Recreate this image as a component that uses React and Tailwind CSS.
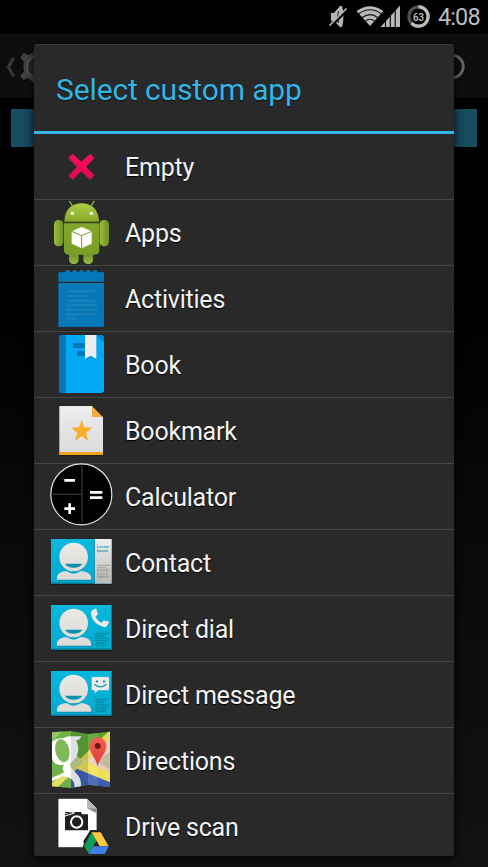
import React from "react";

const EmptyIcon = () => (
  <path
    d="M74 60 L100 84 L126 60 L139 72 L114 98 L139 124 L126 137 L100 112 L74 137 L62 125 L87 98 L61 72 Z"
    fill="url(#cross)"
    stroke="#9b2a4c"
    strokeWidth="1.5"
    strokeLinejoin="round"
  />
);

const AppsIcon = () => (
  <g>
    <path d="M65 4 L73 17 M138 4 L130 17" stroke="#91b32c" strokeWidth="4" strokeLinecap="round" />
    <rect x="63" y="140" width="29" height="52" rx="13" fill="url(#droidDark)" />
    <rect x="106" y="140" width="29" height="52" rx="13" fill="url(#droidDark)" />
    <rect x="18" y="60" width="28" height="79" rx="13" fill="url(#droidSide)" />
    <rect x="155" y="60" width="28" height="79" rx="13" fill="url(#droidSide)" />
    <path d="M49 65 C50 28 72 10 101 10 C130 10 152 28 153 65 Z" fill="url(#droidHead)" />
    <path d="M48 70 H154 V150 Q154 164 140 164 H62 Q48 164 48 150 Z" fill="url(#droidBody)" />
    <path d="M48 67 H154" stroke="#3b4816" strokeWidth="3" />
    <circle cx="73" cy="40" r="5" fill="#fff" />
    <circle cx="130" cy="40" r="5" fill="#fff" />
    <path d="M101 81 L131 94 V131 L101 145 L71 131 V94 Z" fill="#fff" />
    <path d="M71 94 L101 107 L131 94 M101 107 V145" fill="none" stroke="#779c25" strokeWidth="3" />
  </g>
);

const ActivitiesIcon = () => (
  <g>
    <path
      d="M31 19 H51 Q53 12 59 12 Q65 12 67 18 H72 Q74 12 80 12 Q86 12 88 18 H92 Q94 12 100 12 Q106 12 108 18 H113 Q115 12 121 12 Q127 12 129 18 H133 Q135 12 141 12 Q147 12 149 19 H168 V47 H31 Z"
      fill="#0478b8"
    />
    <rect x="31" y="52" width="137" height="131" rx="2" fill="#0478b8" />
    <path d="M31 53 H168" stroke="#1989c5" strokeWidth="2" />
    <path
      d="M60 76 H147 M53 90 H120 M60 104 H147 M53 117 H147 M53 131 H148 M53 145 H147 M53 159 H87"
      stroke="#1d82b7"
      strokeWidth="5"
    />
  </g>
);

const BookIcon = () => (
  <g>
    <rect x="33" y="9" width="135" height="174" rx="9" fill="#03a9f4" />
    <path d="M54 9 H42 Q33 9 33 18 V174 Q33 183 42 183 H54 Z" fill="#0478b8" />
    <path d="M75 33 H112 V48 H75 Z M87 57 H112 V72 H87 Z" fill="#0478b8" />
    <path d="M145 9 L168 32 V18 Q168 9 159 9 Z" fill="#0288c9" />
    <path d="M112 14 L113 86 L128 77 L145 86 V14 Z" fill="#0277bd" opacity=".35" />
    <path d="M111 9 H145 V81 L128 71 L111 81 Z" fill="#eee" />
  </g>
);

const BookmarkIcon = () => (
  <g>
    <path d="M36 27 H165 V173 H36 Z" fill="#151515" opacity=".6" />
    <path d="M36 24 H132 L165 57 V171 H36 Q34 171 34 168 V27 Q34 24 36 24 Z" fill="url(#paper)" />
    <path d="M34 162 H165 V168 Q165 171 162 171 H37 Q34 171 34 168 Z" fill="#eda11f" />
    <path d="M132 24 L165 57 H136 Q132 57 132 53 Z" fill="#f3ad37" />
    <path d="M101 65 L109 88 L133 89 L114 104 L121 129 L101 114 L81 129 L88 104 L69 89 L93 88 Z" fill="#fbae29" />
    <path d="M132 24 L168 60 V22 Z" fill="#292929" />
  </g>
);

const CalculatorIcon = () => (
  <g>
    <circle cx="100" cy="91" r="91.5" fill="#000" stroke="#e5e5e5" strokeWidth="3.5" />
    <path d="M102 6 V178 M14 91 H102" stroke="#444" strokeWidth="3" />
    <path d="M49 49 H81 M49 134 H81 M65 118 V150" stroke="#fff" strokeWidth="8" />
    <path d="M126 85 H163 M126 101 H163" stroke="#fff" strokeWidth="8" />
  </g>
);

// Cyan card with the avatar, shared by the three contact shortcuts
const ContactCard = ({ children }) => (
  <g>
    <rect x="9" y="28" width="183" height="137" fill="#121212" opacity=".6" />
    <rect x="9" y="27" width="182" height="134" fill="url(#cyan)" />
    <path d="M10 159 H191" stroke="#057c99" strokeWidth="3" />
    <path d="M27 152 V142 Q30 129 49 126 H57 Q75 138 96 126 H105 Q126 129 129 142 V152 Z" fill="#087a95" opacity=".6" />
    <circle cx="77" cy="83" r="43" fill="#087a95" opacity=".5" />
    <circle cx="77" cy="81" r="43" fill="url(#face)" />
    <path d="M27 149 V140 Q30 128 49 124 H57 Q77 138 97 124 H105 Q126 128 129 140 V149 Z" fill="#deddda" />
    <path d="M51 101 H103 Q96 113 77 113 Q58 113 51 101 Z" fill="#0b91ae" />
    {children}
  </g>
);

const ContactIcon = () => (
  <ContactCard>
    <rect x="140" y="27" width="51" height="134" fill="url(#strip)" />
    <path d="M138 27 H141 V161 H138 Z" fill="#077a96" opacity=".6" />
    <text x="146" y="53" fontSize="11" fontWeight="700" fill="#1898b6" textLength="36">Lorem</text>
    <text x="146" y="65" fontSize="11" fontWeight="700" fill="#1898b6" textLength="34">Ipsum</text>
    <path d="M147 106 H187 M147 122 H187 M147 139 H187" stroke="#777" strokeWidth="1.5" />
    <path d="M147 112 H176 M147 117 H180 M147 129 H180 M147 134 H180 M147 143 H180" stroke="#999" strokeWidth="2.5" strokeDasharray="7 2" />
  </ContactCard>
);

const CardLines = () => (
  <g stroke="#08788f">
    <path d="M141 112 H182 M141 127 H182 M141 133 H182" strokeWidth="2" />
    <path d="M143 117 H174 M143 122 H171 M143 139 H175 M143 144 H175 M143 149 H175" strokeWidth="2.5" strokeDasharray="7 2" />
  </g>
);

const DirectDialIcon = () => (
  <ContactCard>
    <path
      d="M131 44 L141 38 Q145 36 146 41 L149 53 Q150 57 145 59 L142 61 Q148 75 161 81 L164 76 Q166 73 170 74 L181 76 Q185 78 182 82 L176 91 Q174 94 168 93 C145 87 130 72 129 51 Q129 46 131 44 Z"
      fill="#eeece8"
    />
    <CardLines />
  </ContactCard>
);

const DirectMessageIcon = () => (
  <ContactCard>
    <path d="M134 45 H180 Q183 45 183 48 V82 Q183 85 180 85 H150 L140 95 V85 H134 Q131 85 131 82 V48 Q131 45 134 45 Z" fill="#eeece8" />
    <circle cx="147" cy="58" r="3.5" fill="#0999b8" />
    <circle cx="168" cy="58" r="3.5" fill="#0999b8" />
    <path d="M139 67 Q157 82 176 67" fill="none" stroke="#0999b8" strokeWidth="4" />
    <CardLines />
  </ContactCard>
);

const DirectionsIcon = () => (
  <g>
    <clipPath id="mapShape">
      <path d="M12 13 L69 9 L120 18 L186 11 V177 L120 170 L69 180 L12 175 Z" />
    </clipPath>
    <g clipPath="url(#mapShape)">
      <rect x="12" y="8" width="176" height="174" fill="#58a52a" />
      <path d="M186 11 L90 105 L125 160 L186 170 Z" fill="#e7cfb8" />
      <path d="M145 100 L186 71 V125 Z" fill="#c8b89f" />
      <path d="M186 6 L71 118 L85 128 L186 34 Z" fill="#e8d75c" />
      <path d="M100 92 L186 136 V162 L82 121 Z" fill="#eee153" />
      <path d="M82 121 L186 163 V182 H69 L68 130 Z" fill="#3b5db2" />
      <path d="M12 166 L70 110 L86 124 L26 180 H12 Z" fill="#e3d84f" />
      <path d="M12 10 V40 L46 8 Z" fill="#7cbd48" />
      <path d="M67 75 H80 L105 102 L70 130 Z" fill="#c3d282" />
      <path d="M45 31 C58 24 68 25 77 25 H101 L92 36 H84 C97 60 91 88 71 102 C61 112 69 121 81 132 C98 148 102 162 97 182 H80 C81 158 70 147 43 145 L12 160 V149 L51 133 C41 126 43 116 49 110 C24 114 12 102 12 88 V42 C22 32 34 30 45 31 Z" fill="#fff" />
      <ellipse cx="43" cy="68" rx="21" ry="35" transform="rotate(-12 43 68)" fill="#68ad3e" />
      <path d="M12 13 L69 9 V180 L12 175 Z" fill="#fff" opacity=".15" />
      <path d="M69 9 L120 18 V170 L69 180 Z" fill="#345" opacity=".17" />
      <path d="M120 18 L150 13 V174 L120 170 Z" fill="#fff" opacity=".1" />
    </g>
    <path d="M149 116 C145 91 125 78 125 54 A25 27 0 0 1 175 54 C175 78 153 91 149 116 Z" fill="url(#pin)" />
    <circle cx="149" cy="54" r="9" fill="#6d1814" />
  </g>
);

const DriveScanIcon = () => (
  <g>
    <path d="M31 13 H117 L147 42 V161 H31 Q29 161 29 159 V15 Q29 13 31 13 Z" fill="#111" />
    <path d="M32 14 H117 L146 43 V110 H126 L106 142 L112 160 H31 V15 Z" fill="#fff" />
    <path d="M117 14 L146 43 H117 Z" fill="#b7b7b7" />
    <path d="M117 43 H146 V58 Z" fill="#8b8b8b" />
    <path d="M51 61 H69 V56 H78 L81 54 H99 L102 61 H120 V109 H51 Z" fill="#202020" />
    <path d="M51 56 H65 M51 64 L72 57" stroke="#202020" strokeWidth="4" />
    <path d="M51 66 L80 57" stroke="#fff" strokeWidth="3" />
    <circle cx="86" cy="84" r="17" fill="#202020" stroke="#fff" strokeWidth="6" />
    <path d="M127 108 H162 L188 159 L172 183 H120 L104 157 Z" fill="#242424" />
    <path d="M131 115 L146 139 L122 179 L108 156 Z" fill="#109d58" />
    <path d="M131 115 H158 L182 157 H155 Z" fill="#fdc73e" />
    <path d="M135 157 H183 L170 180 H122 Z" fill="#3f7ee8" />
  </g>
);

const items = [
  { label: "Empty", Icon: EmptyIcon },
  { label: "Apps", Icon: AppsIcon },
  { label: "Activities", Icon: ActivitiesIcon },
  { label: "Book", Icon: BookIcon },
  { label: "Bookmark", Icon: BookmarkIcon },
  { label: "Calculator", Icon: CalculatorIcon },
  { label: "Contact", Icon: ContactIcon },
  { label: "Direct dial", Icon: DirectDialIcon },
  { label: "Direct message", Icon: DirectMessageIcon },
  { label: "Directions", Icon: DirectionsIcon },
  { label: "Drive scan", Icon: DriveScanIcon },
];

const Gradient = ({ id, from, to, horizontal }) => (
  <linearGradient id={id} x1="0" y1="0" x2={horizontal ? "1" : "0"} y2={horizontal ? "0" : "1"}>
    <stop stopColor={from} />
    <stop offset="1" stopColor={to} />
  </linearGradient>
);

const IconGradients = () => (
  <svg className="absolute w-0 h-0">
    <defs>
      <Gradient id="cross" from="#ff0a62" to="#df0a51" />
      <Gradient id="droidHead" from="#adcc42" to="#86aa29" />
      <Gradient id="droidBody" from="#83a62a" to="#78a025" />
      <Gradient id="droidSide" from="#9dbd3c" to="#6d8e23" horizontal />
      <Gradient id="droidDark" from="#55751b" to="#98ba40" />
      <Gradient id="paper" from="#ededed" to="#dadada" />
      <Gradient id="cyan" from="#08b8dc" to="#04a9ce" />
      <Gradient id="face" from="#eceae7" to="#dcdbd8" />
      <Gradient id="strip" from="#eeeeec" to="#b9b9b6" />
      <Gradient id="pin" from="#f46258" to="#da3935" />
    </defs>
  </svg>
);

const StatusBar = () => (
  <div className="h-[34px] shrink-0 bg-black flex items-center justify-end pr-2">
    <svg width="111" height="34" viewBox="324 0 111 34" className="shrink-0">
      <path d="M331 13 H334 L340 6 H342 Q345 16 342 27 H340 L334 21 H331 Z" fill="#b5b5b5" />
      <path d="M338.5 11 Q336.5 17 338.5 23" fill="none" stroke="#222" strokeWidth="1" />
      <path d="M330.5 26.5 L347.5 9.5" stroke="#000" strokeWidth="3" />
      <path d="M329.5 25.5 L346.5 8.5" stroke="#b5b5b5" strokeWidth="1.7" />
      <path d="M370 26 L356.5 11 Q370 1.5 383.5 11 Z" fill="#b9b9b9" />
      <path d="M358.5 14 Q370 5.5 381.5 14 M362 17.7 Q370 11.5 378 17.7 M365.5 21 Q370 17.5 374.5 21" fill="none" stroke="#111" strokeWidth="1.1" />
      <path d="M400 5.5 V27 H380.5 Z" fill="#b9b9b9" />
      <path d="M385.5 20 V27 M390.3 15 V27 M395.2 9 V27" stroke="#000" strokeWidth="1.1" />
      <circle cx="418.5" cy="16.5" r="9.6" fill="none" stroke="#505050" strokeWidth="3.2" />
      <path d="M418.5 6.9 A9.6 9.6 0 1 1 411.5 23.1" fill="none" stroke="#bdbdbd" strokeWidth="3.2" />
      <text x="418.5" y="20.6" textAnchor="middle" fontSize="11.5" fontWeight="500" textLength="11" lengthAdjust="spacingAndGlyphs" fill="#c4c4c4">63</text>
    </svg>
    <span className="ml-[3px] mt-[2px] w-[42px] text-[23.5px] leading-none tracking-[-0.9px] text-[#bdbdbd]">4:08</span>
  </div>
);

const ActionBar = () => (
  <div className="h-16 shrink-0 bg-[#0e0e0e] border-t border-[#171717] flex items-center justify-between px-[6px]">
    <svg width="48" height="40" viewBox="6 46 48 40">
      <path d="M13.5 57 L8.5 66 L13.5 75.5" fill="none" stroke="#363636" strokeWidth="3.2" />
      <path
        d="M20.5 56.5 L23.5 52 L28 54 L34 51 V82 L28 77 L23.5 79 L20 74.5 L24 71 Q22.5 66 24 61 Z"
        fill="#424242"
      />
      <circle cx="38" cy="66" r="11" fill="#2b2b2b" stroke="#5a5a5a" strokeWidth="1.5" />
    </svg>
    <svg width="46" height="40" viewBox="436 46 46 40">
      <circle cx="452" cy="65.5" r="11.3" fill="none" stroke="#666" strokeWidth="2.8" />
    </svg>
  </div>
);

const App = () => {
  return (
    <div className="relative w-full h-[867px] overflow-hidden bg-black flex flex-col font-['Roboto',sans-serif]">
      <IconGradients />
      <StatusBar />
      <ActionBar />
      <div className="flex-1 bg-gradient-to-b from-black via-[#06080a] to-[#111214] px-[11px] pt-[11px]">
        <div className="h-[38px] bg-[#174b5f]" />
      </div>

      {/* Dialog */}
      <div className="absolute left-[34px] top-[44px] w-[420px] h-[812px] rounded-[3px] overflow-hidden bg-[#292929] border-t border-[#3b3b3b] shadow-[0_3px_8px_1px_rgba(0,0,0,0.75)]">
        <div className="h-[89px] border-b-3 border-[#33b5e5] pt-1 pl-[22px] flex items-center">
          <h1 className="text-[30px] leading-none tracking-[-0.13px] text-[#33b5e5] whitespace-nowrap [text-shadow:0_1px_1px_#111]">
            Select custom app
          </h1>
        </div>
        <ul>
          {items.map(({ label, Icon }) => (
            <li key={label} className="h-[66px] border-b border-[#464646] pl-[14px] flex items-center">
              <svg width="66" height="66" viewBox="0 0 198 198" className="shrink-0 overflow-visible">
                <Icon />
              </svg>
              <span className="ml-[11px] mt-px text-[25px] leading-none tracking-[-0.22px] text-[#f3f3f3] whitespace-nowrap [text-shadow:0_1px_1px_#000]">
                {label}
              </span>
            </li>
          ))}
        </ul>
      </div>
    </div>
  );
};

export default App;
